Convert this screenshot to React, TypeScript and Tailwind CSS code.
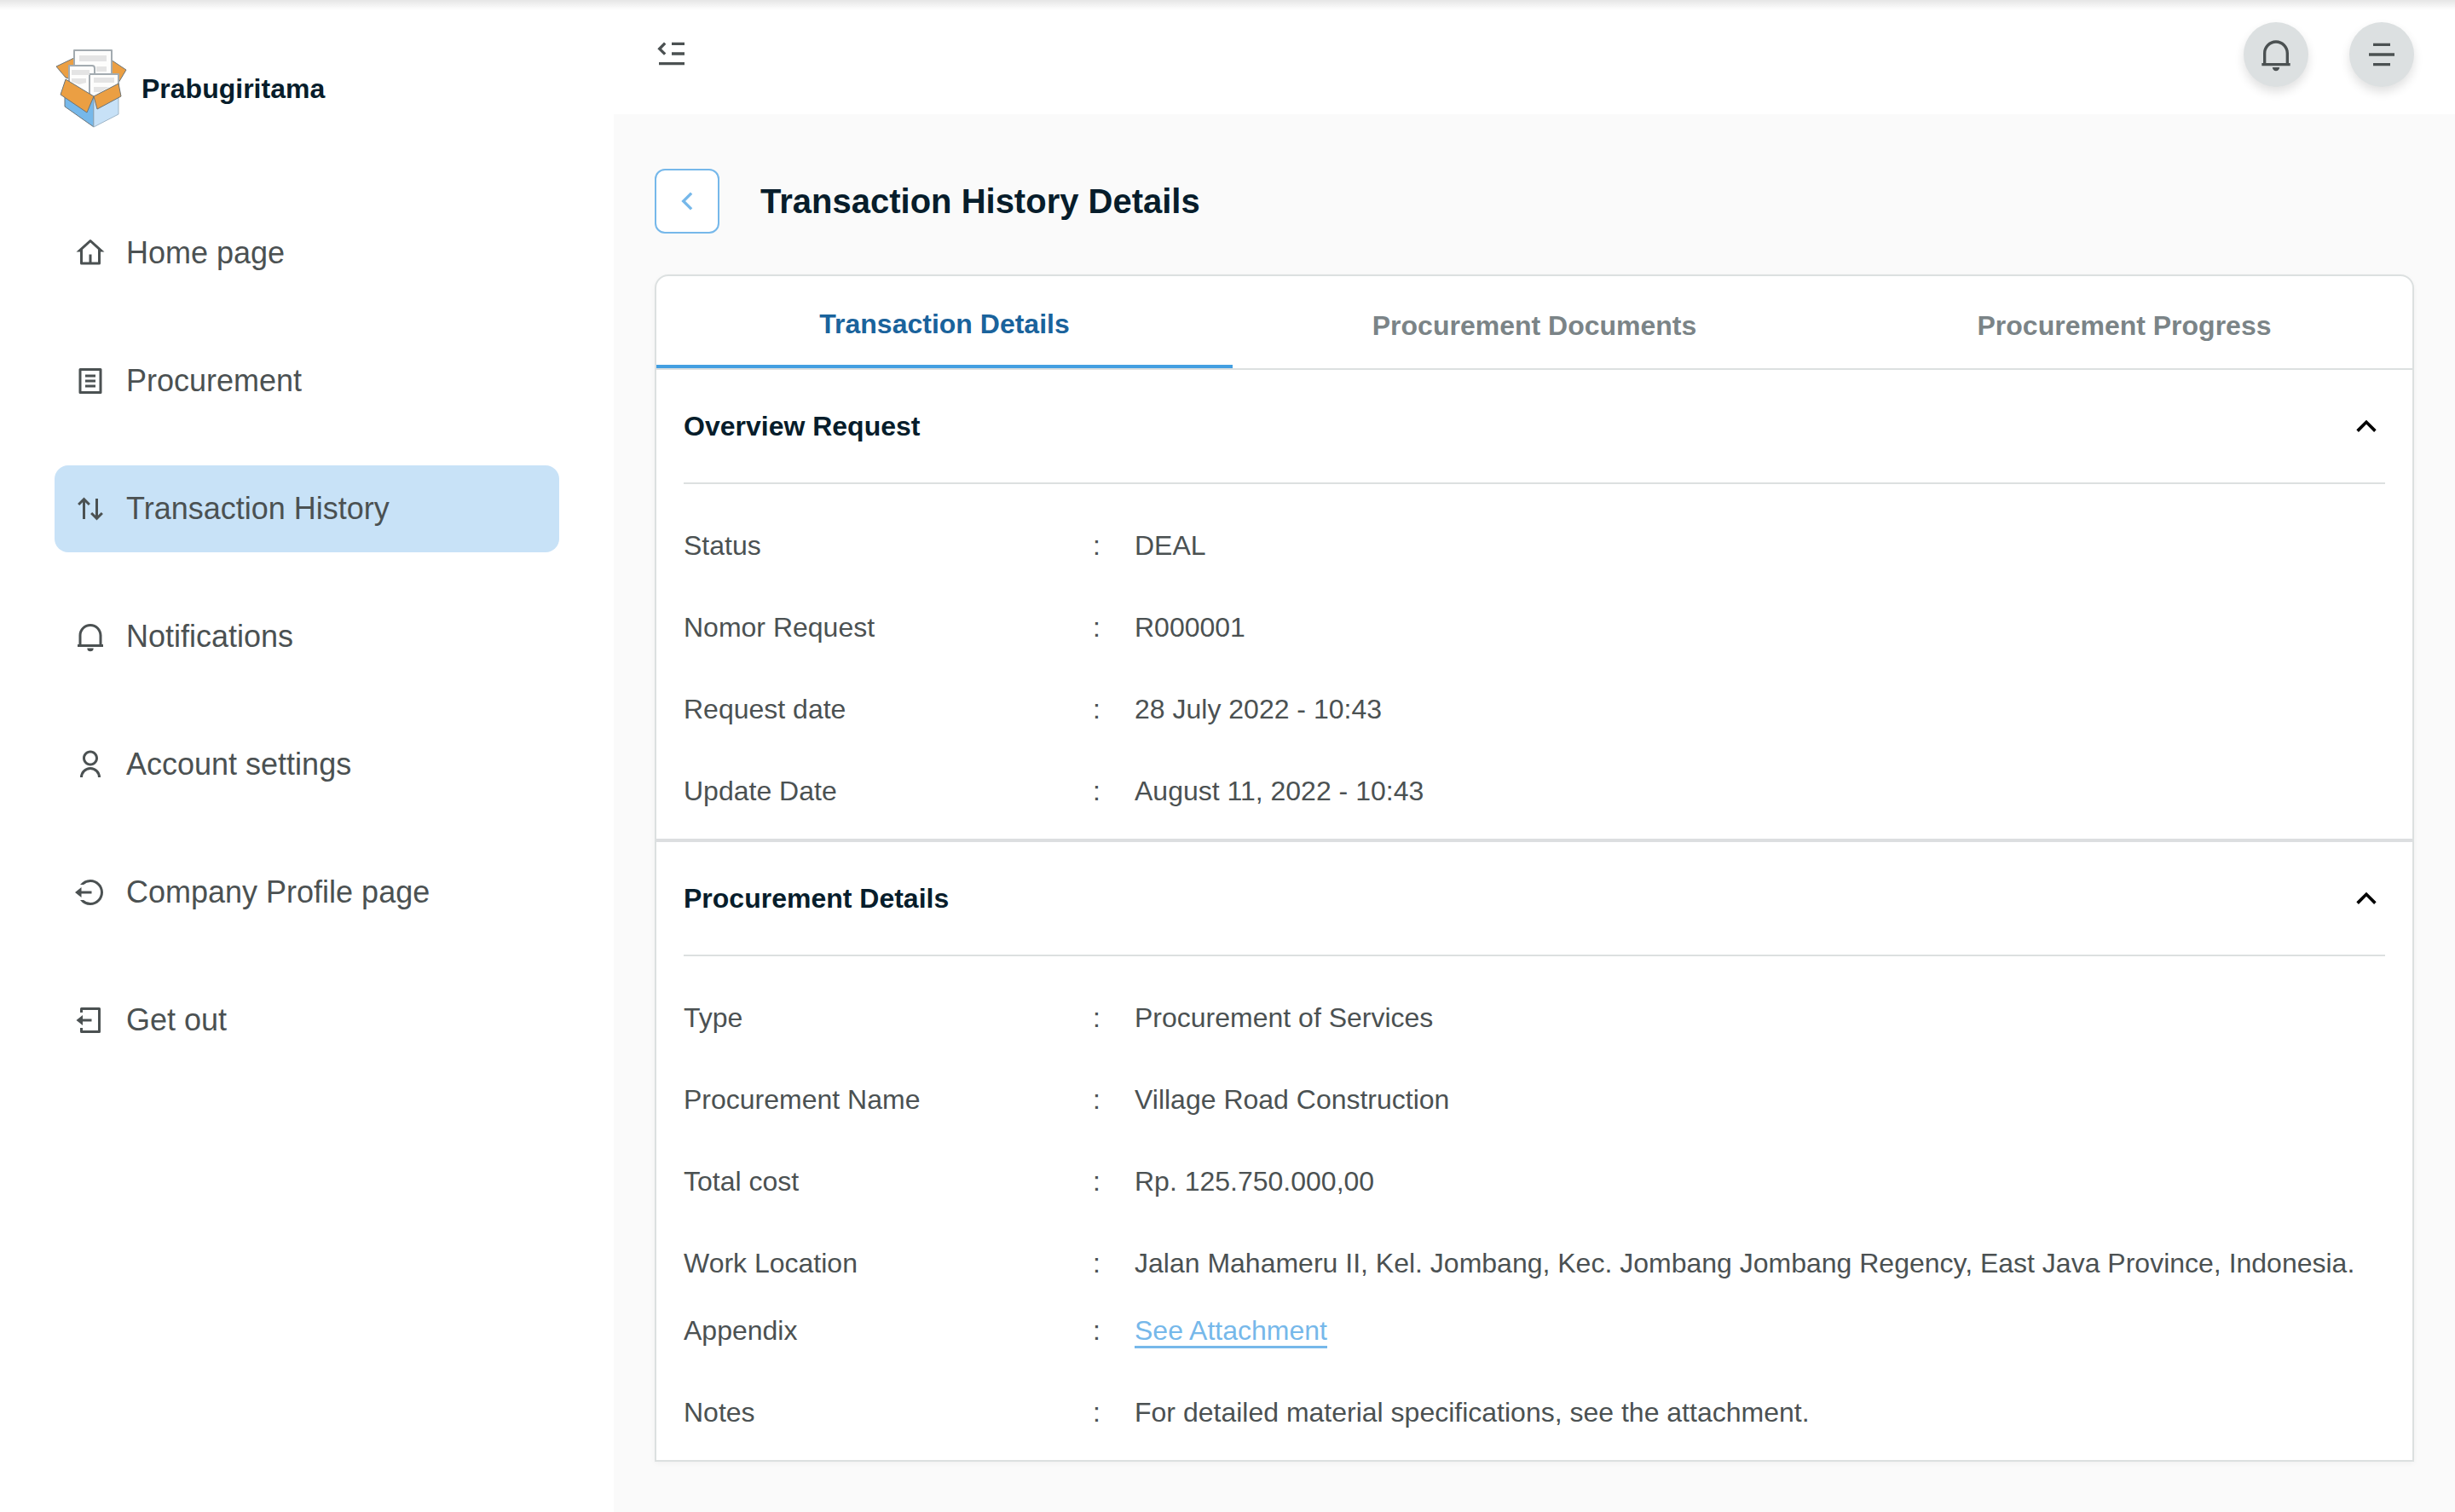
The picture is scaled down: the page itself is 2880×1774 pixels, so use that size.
import { useState, type ReactNode } from "react";

type IconProps = { d: string; className?: string };

const Icon = ({ d, className = "size-9" }: IconProps) => (
  <svg viewBox="0 0 24 24" fill="currentColor" aria-hidden="true" className={`shrink-0 ${className}`}>
    <path d={d} />
  </svg>
);

const icons = {
  home: "M19 21H5a1 1 0 0 1-1-1v-9H1l10.327-9.388a1 1 0 0 1 1.346 0L23 11h-3v9a1 1 0 0 1-1 1zm-6-2h5V9.157l-6-5.454-6 5.454V19h5v-6h2v6z",
  list: "M20 22H4a1 1 0 0 1-1-1V3a1 1 0 0 1 1-1h16a1 1 0 0 1 1 1v18a1 1 0 0 1-1 1zm-1-2V4H5v16h14zM8 7h8v2H8V7zm0 4h8v2H8v-2zm0 4h8v2H8v-2z",
  upDown:
    "M11.95 7.95l-1.414 1.414L8 6.828V20H6V6.828L3.465 9.364 2.05 7.95 7 3l4.95 4.95zm10 8.1L17 21l-4.95-4.95 1.414-1.414L16 17.172V4h2v13.172l2.536-2.536 1.414 1.414z",
  bell: "M22 20H2v-2h1v-6.969C3 6.043 7.03 2 12 2s9 4.043 9 9.031V18h1v2zM5 18h14v-6.969C19 7.148 15.866 4 12 4s-7 3.148-7 7.031V18zm4.5 3h5a2.5 2.5 0 1 1-5 0z",
  user: "M4 22a8 8 0 1 1 16 0h-2a6 6 0 1 0-12 0H4zm8-9c-3.315 0-6-2.685-6-6s2.685-6 6-6 6 2.685 6 6-2.685 6-6 6zm0-2c2.21 0 4-1.79 4-4s-1.79-4-4-4-4 1.79-4 4 1.79 4 4 4z",
  logoutCircle:
    "M5 11h8v2H5v3l-5-4 5-4v3zm-1 7h2.708a8 8 0 1 0 0-12H4a9.985 9.985 0 0 1 8-4c5.523 0 10 4.477 10 10s-4.477 10-10 10a9.985 9.985 0 0 1-8-4z",
  logoutBox:
    "M4 18h2v2h12V4H6v2H4V3a1 1 0 0 1 1-1h14a1 1 0 0 1 1 1v18a1 1 0 0 1-1 1H5a1 1 0 0 1-1-1v-3zm2-7h7v2H6v3l-5-4 5-4v3z",
  fold: "M21 18v2H3v-2h18zM6.596 3.904L8.01 5.318 4.828 8.5l3.182 3.182-1.414 1.414L2 8.5l4.596-4.596zM21 11v2h-9v-2h9zm0-7v2h-9V4h9z",
  menu: "M18 18v2H6v-2h12zm3-7v2H3v-2h18zm-3-7v2H6V4h12z",
  left: "M10.828 12l4.95 4.95-1.414 1.414L8 12l6.364-6.364 1.414 1.414z",
  up: "M12 10.828l-4.95 4.95-1.414-1.414L12 8l6.364 6.364-1.414 1.414z",
};

const Logo = () => (
  <svg viewBox="-1 0 86 94" aria-hidden="true" className="h-[94px] w-[86px] shrink-0" strokeLinejoin="round">
    <g stroke="#6b7478" strokeWidth="1">
      <path d="M1 21 24 10v28L12 34z" fill="#eb9f43" />
      <path d="M65 13 83 25 74 40 62 36z" fill="#eb9f43" />
      <path d="M22 2h44v50H22z" fill="#fdfdfc" stroke="#a3abb0" strokeWidth="2" />
      <path d="M16 20h27a3 3 0 0 1 3 3v34L16 44z" fill="#fdfdfc" stroke="#a3abb0" strokeWidth="2" />
      <path d="M40 30h34v18L44 58l-4-4z" fill="#fdfdfc" stroke="#a3abb0" strokeWidth="2" />
      <path d="M11 56v12l34 24V58z" fill="#76b8ea" />
      <path d="M45 58v34l29-15V56z" fill="#c7e1f7" stroke="#9fb6c8" />
      <path d="M12 36 45 56 37 75 6 54z" fill="#eb9f43" />
      <path d="M45 56 74 41l3 15-28 15z" fill="#eb9f43" />
    </g>
    <path d="M28 8h32v7H28zM48 21h12v6H48zM19 25h21v6H19zM19 35h17v5l-8 2-9-3zM45 34h24v6H45zM45 45h18l-10 6h-8z" fill="#e4e4e4" />
  </svg>
);

const navItems = [
  { label: "Home page", icon: icons.home },
  { label: "Procurement", icon: icons.list },
  { label: "Transaction History", icon: icons.upDown, active: true },
  { label: "Notifications", icon: icons.bell },
  { label: "Account settings", icon: icons.user },
  { label: "Company Profile page", icon: icons.logoutCircle },
  { label: "Get out", icon: icons.logoutBox },
];

const Sidebar = () => (
  <aside className="w-1/4 shrink-0 bg-white px-16 pt-14">
    <a href="#home" className="flex h-24 items-center gap-4 text-[32px] font-bold text-[#071d2b]">
      <Logo />
      Prabugiritama
    </a>
    <nav className="mt-[94px] flex flex-col gap-12">
      {navItems.map(({ label, icon, active }) => (
        <a
          key={label}
          href="#page"
          aria-current={active ? "page" : undefined}
          className={`flex h-[102px] items-center gap-6 rounded-2xl px-6 text-4xl text-[#4b5152] ${active ? "bg-[#c8e2f7]" : ""}`}
        >
          <Icon d={icon} />
          {label}
        </a>
      ))}
    </nav>
  </aside>
);

const RoundButton = ({ label, d }: { label: string; d: string }) => (
  <button
    aria-label={label}
    className="flex size-[76px] items-center justify-center rounded-full bg-[#dce0e1] text-[#4b5152] shadow-[0_6px_12px_rgba(0,0,0,0.12)]"
  >
    <Icon d={d} className="size-10" />
  </button>
);

type Row = { label: string; value: ReactNode; compact?: boolean };

const overview: Row[] = [
  { label: "Status", value: "DEAL" },
  { label: "Nomor Request", value: "R000001" },
  { label: "Request date", value: "28 July 2022 - 10:43" },
  { label: "Update Date", value: "August 11, 2022 - 10:43" },
];

const details: Row[] = [
  { label: "Type", value: "Procurement of Services" },
  { label: "Procurement Name", value: "Village Road Construction" },
  { label: "Total cost", value: "Rp. 125.750.000,00" },
  {
    label: "Work Location",
    value: "Jalan Mahameru II, Kel. Jombang, Kec. Jombang Jombang Regency, East Java Province, Indonesia.",
    compact: true,
  },
  {
    label: "Appendix",
    value: (
      <a href="#attachment" className="border-b-3 border-[#76b8ea] text-[#76b8ea]">
        See Attachment
      </a>
    ),
  },
  { label: "Notes", value: "For detailed material specifications, see the attachment." },
];

const Section = ({ title, rows }: { title: string; rows: Row[] }) => {
  const [open, setOpen] = useState(true);
  return (
    <section className="px-8">
      <h2 className="border-b-2 border-[#dce0e0] font-bold text-[#071d2b]">
        <button
          aria-expanded={open}
          onClick={() => setOpen(!open)}
          className="flex h-[132px] w-full items-center justify-between"
        >
          {title}
          <Icon d={icons.up} className={`size-11 text-black ${open ? "" : "rotate-180"}`} />
        </button>
      </h2>
      {open && (
        <dl className="pt-6 pb-2 text-[#4b5152]">
          {rows.map(({ label, value, compact }) => (
            <div key={label} className={`flex pt-6 leading-12 ${compact ? "pb-[7px]" : "pb-6"}`}>
              <dt className="flex w-[529px] shrink-0 justify-between pr-10">
                {label}
                <span>:</span>
              </dt>
              <dd>{value}</dd>
            </div>
          ))}
        </dl>
      )}
    </section>
  );
};

const tabs = ["Transaction Details", "Procurement Documents", "Procurement Progress"];

export default function App() {
  const [tab, setTab] = useState(0);
  return (
    <div className="relative flex min-h-screen bg-[#fafafa] font-['Liberation_Sans',Arial,sans-serif] text-[32px]">
      <div className="pointer-events-none absolute inset-x-0 top-0 h-3 bg-linear-to-b from-black/10 to-transparent" />
      <Sidebar />
      <div className="min-w-0 flex-1">
        <header className="flex h-[134px] items-start justify-between bg-white px-12 pt-[26px]">
          <button aria-label="Collapse sidebar" className="flex h-[74px] items-center text-[#4b5152]">
            <Icon d={icons.fold} className="size-10" />
          </button>
          <div className="flex gap-12">
            <RoundButton label="Notifications" d={icons.bell} />
            <RoundButton label="Menu" d={icons.menu} />
          </div>
        </header>
        <main className="px-12 pt-16 pb-14">
          <div className="flex items-center gap-12">
            <button
              aria-label="Back"
              className="flex size-[76px] items-center justify-center rounded-xl border-2 border-[#76b8ea] bg-white text-[#76b8ea]"
            >
              <Icon d={icons.left} className="size-10" />
            </button>
            <h1 className="text-[40px] font-bold text-[#071d2b]">Transaction History Details</h1>
          </div>
          <div className="mt-12 rounded-t-2xl border-2 border-[#dce0e0] bg-white shadow-[0_2px_6px_rgba(0,0,0,0.04)]">
            <div role="tablist" className="grid grid-cols-3 gap-4 border-b-2 border-[#dce0e0]">
              {tabs.map((label, i) => (
                <button
                  key={label}
                  role="tab"
                  aria-selected={i === tab}
                  onClick={() => setTab(i)}
                  className={`h-[108px] pt-2 font-bold ${i === tab ? "border-b-4 border-[#439fe1] text-[#1a639c]" : "text-[#7b8487]"}`}
                >
                  {label}
                </button>
              ))}
            </div>
            <Section title="Overview Request" rows={overview} />
            <hr className="border-t-4 border-[#dcdee0]" />
            <Section title="Procurement Details" rows={details} />
          </div>
        </main>
      </div>
    </div>
  );
}
